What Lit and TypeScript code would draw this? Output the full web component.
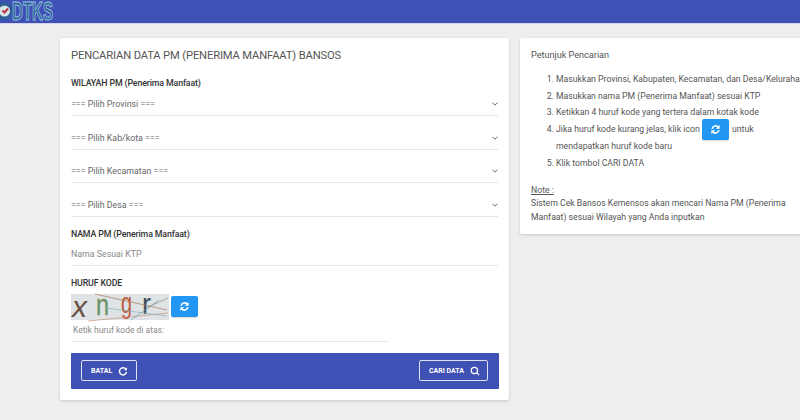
import { LitElement, html, css, svg } from "lit";
import { customElement } from "lit/decorators.js";

const refresh = svg`<svg class="ri" viewBox="0 0 24 24" fill="none" stroke="currentColor" stroke-width="3.6"><path d="M4.5 10.5A8 8 0 0 1 18.5 7"/><path d="M21 2v8.5h-8.500" fill="currentColor" stroke="none"/><path d="M19.5 13.5A8 8 0 0 1 5.5 17"/><path d="M3 22v-8.5h8.5" fill="currentColor" stroke="none"/></svg>`;

@customElement("app-root")
export class AppRoot extends LitElement {
  static styles = css`
    :host { display: block; width: 800px; height: 420px; overflow: hidden; background: #eeeeee; font-family: Roboto, "Liberation Sans", sans-serif; color: #555; font-size: 8.8px; }
    .top { height: 23px; background: #3f51b5; box-shadow: 0 1px 1px #d5d3ee; display: flex; align-items: center; overflow: hidden; }
    .logo { width: 60px; height: 23px; display: block; overflow: visible; }
    .logo text { font: 700 25px "Liberation Sans", sans-serif; }
    .page { display: flex; gap: 11px; padding: 15px 0 0 60px; align-items: flex-start; width: 1100px; }
    .card { background: #fff; box-shadow: 0 1px 3px rgba(0,0,0,.16); border-radius: 2px; box-sizing: border-box; }
    .main { width: 449px; height: 362px; padding: 10px 11px 0; display: flex; flex-direction: column; }
    h1 { margin: 0; font-size: 11.2px; letter-spacing: -0.14px; font-weight: 400; line-height: 16px; color: #555; white-space: nowrap; }
    .label { font-size: 8.8px; letter-spacing: -0.14px; font-weight: 500; color: #333; line-height: 12px; white-space: nowrap; }
    .select { height: 33.4px; box-sizing: border-box; border-bottom: 1px solid #e6e6e6; display: flex; align-items: flex-end; justify-content: space-between; padding-bottom: 5px; line-height: 12px; color: #666; font-size: 8.84px; }
    .chev { width: 6px; height: 4px; margin-bottom: 4px; color: #666; }
    .w { margin-top: 13px; margin-bottom: -6px; }
    .n { margin-top: 11px; }
    .name { height: 23px; margin-top: 3px; padding-top: 1px; border-bottom: 1px solid #e6e6e6; display: flex; align-items: center; color: #8a8a8a; box-sizing: border-box; font-size: 8.8px; }
    .h { margin-top: 11px; }
    .cap-row { display: flex; align-items: center; gap: 2px; margin-top: 5px; }
    .cap { width: 98px; height: 26px; display: block; overflow: visible; }
    .cap text { font-family: "Liberation Sans", sans-serif; font-size: 30px; }
    .rbtn { width: 27px; height: 21px; background: #2196f3; color: #fff; border-radius: 2px; display: inline-flex; align-items: center; justify-content: center; box-shadow: 0 1px 1px rgba(0,0,0,.15); }
    .ri { width: 11px; height: 11px; display: block; }
    .code { width: 318px; height: 22px; box-sizing: border-box; padding-left: 2px; border-bottom: 1px solid #e6e6e6; display: flex; align-items: center; color: #8a8a8a; font-size: 8.5px; }
    .bar { height: 36px; margin-top: 11px; background: #3f51b5; border-radius: 1px; display: flex; align-items: center; justify-content: space-between; padding: 0 11px 0 10px; margin-right: -1px; }
    .btn { height: 21px; box-sizing: border-box; border: 1px solid #dfe3f6; border-radius: 2px; color: #fff; display: flex; align-items: center; font-size: 7px; font-weight: 700; justify-content: space-between; }
    .b1 { width: 56px; padding: 0 8px 0 9px; }
    .b2 { width: 69px; padding: 0 7px 0 9px; }
    .btn svg { width: 10px; height: 10px; display: block; }
    .side { width: 320px; height: 196px; padding: 10px 11px 0; font-size: 8.7px; white-space: nowrap; }
    .side p { margin: 0; }
    .pt { line-height: 14px; font-size: 9.1px; }
    ol { margin: 9px 0 0; padding: 0 0 0 25px; }
    li { line-height: 16.7px; }
    .inl { display: inline-flex; width: 27px; height: 21px; vertical-align: middle; margin: -3px 1px -2px 0; }
    .note { margin-top: 13px !important; line-height: 13px; text-decoration: underline; }
    .txt { line-height: 13.4px; }
  `;

  private chev() {
    return svg`<svg class="chev" viewBox="0 0 6 4" fill="none" stroke="currentColor" stroke-width="1"><path d="M.5.7 3 3.2 5.5.7"/></svg>`;
  }

  render() {
    const sel = ["=== Pilih Provinsi ===", "=== Pilih Kab/kota ===", "=== Pilih Kecamatan ===", "=== Pilih Desa ==="];
    return html`
      <div class="top">
        <svg class="logo" viewBox="0 0 60 23">
          <circle cx="4.5" cy="11" r="8.5" fill="#2d5f95"/>
          <circle cx="4.5" cy="11" r="5.5" fill="#d9e4ea"/>
          <path d="M2.500 10.500l2 2 3.500-4" fill="none" stroke="#b93a45" stroke-width="2"/>
          <text x="12" y="20" textLength="41" lengthAdjust="spacingAndGlyphs" fill="#2d5f95" stroke="#9ac8e4" stroke-width="1">DTKS</text>
        </svg>
      </div>
      <div class="page">
        <div class="card main">
          <h1>PENCARIAN DATA PM (PENERIMA MANFAAT) BANSOS</h1>
          <div class="label w">WILAYAH PM (Penerima Manfaat)</div>
          ${sel.map((s) => html`<div class="select"><span>${s}</span>${this.chev()}</div>`)}
          <div class="label n">NAMA PM (Penerima Manfaat)</div>
          <div class="name">Nama Sesuai KTP</div>
          <div class="label h">HURUF KODE</div>
          <div class="cap-row">
            <svg class="cap" viewBox="0 0 98 26">
              <rect width="98" height="26" fill="#dfe3e6"/>
              <g font-weight="400">
                <text x="1" y="23" textLength="15" lengthAdjust="spacingAndGlyphs" fill="#6b5044" font-style="italic">x</text>
                <text x="25" y="21" textLength="13" lengthAdjust="spacingAndGlyphs" fill="#4f9a74" stroke="#b8913c" stroke-width=".4">n</text>
                <text x="50" y="19" textLength="11" lengthAdjust="spacingAndGlyphs" fill="#c0583c">g</text>
                <text x="71" y="20" textLength="9" lengthAdjust="spacingAndGlyphs" fill="#3f4f5c">r</text>
              </g>
              <g fill="none" stroke-width=".7">
                <path d="M24 0 96 16" stroke="#a8775c"/>
                <path d="M17 27 97 19" stroke="#c98f7a"/>
                <path d="M60 26 88 6" stroke="#5fa0ad"/>
                <path d="M75 14 97 4" stroke="#9a8f80"/>
                <path d="M34 14 96 22" stroke="#8ab3b8"/>
              </g>
            </svg>
            <span class="rbtn">${refresh}</span>
          </div>
          <div class="code">Ketik huruf kode di atas:</div>
          <div class="bar">
            <div class="btn b1"><span>BATAL</span>
              <svg viewBox="0 0 24 24" fill="none" stroke="currentColor" stroke-width="3.5"><path d="M19 8A8.5 8.5 0 1 0 20.5 14"/><path d="M21.5 3v7h-7" fill="currentColor" stroke="none"/></svg>
            </div>
            <div class="btn b2"><span>CARI DATA</span>
              <svg viewBox="0 0 24 24" fill="none" stroke="currentColor" stroke-width="3"><circle cx="10.5" cy="10.5" r="7.5"/><path d="M16 16l6 6"/></svg>
            </div>
          </div>
        </div>
        <div class="card side">
          <p class="pt">Petunjuk Pencarian</p>
          <ol>
            <li>Masukkan Provinsi, Kabupaten, Kecamatan, dan Desa/Kelurahan</li>
            <li>Masukkan nama PM (Penerima Manfaat) sesuai KTP</li>
            <li>Ketikkan 4 huruf kode yang tertera dalam kotak kode</li>
            <li>Jika huruf kode kurang jelas, klik icon <span class="rbtn inl">${refresh}</span> untuk<br />mendapatkan huruf kode baru</li>
            <li>Klik tombol CARI DATA</li>
          </ol>
          <p class="note">Note :</p>
          <p class="txt">Sistem Cek Bansos Kemensos akan mencari Nama PM (Penerima<br />Manfaat) sesuai Wilayah yang Anda inputkan</p>
        </div>
      </div>
    `;
  }
}
